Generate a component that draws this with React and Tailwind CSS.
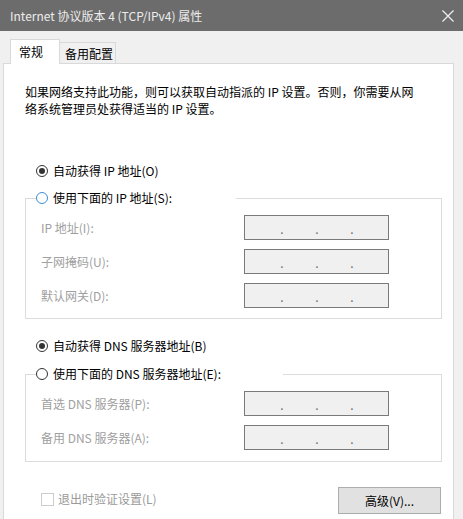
function Radio({ checked, blue }) {
  return (
    <span
      className={
        blue
          ? "flex h-[12px] w-[12px] shrink-0 items-center justify-center rounded-full border border-[#3c8fd9] bg-white"
          : "flex h-[12px] w-[12px] shrink-0 items-center justify-center rounded-full border border-[#333333] bg-white"
      }
    >
      {checked && <span className="h-[6px] w-[6px] rounded-full bg-[#333333]" />}
    </span>
  );
}

function IPBox() {
  return (
    <div className="flex h-[25px] w-[145px] items-center gap-[31px] border border-[#7a7a7a] bg-[#f0f0f0] pl-[35px] text-[12px] leading-[12px] text-[#6d6d6d]">
      <span className="w-[4px] pt-[3px] text-center">.</span>
      <span className="w-[4px] pt-[3px] text-center">.</span>
      <span className="w-[4px] pt-[3px] text-center">.</span>
    </div>
  );
}

function Row({ label }) {
  return (
    <div className="flex items-center">
      <span className="w-[203px] text-[#a0a0a0]">{label}</span>
      <IPBox />
    </div>
  );
}

export default function App() {
  return (
    <div className="flex h-[519px] w-[463px] flex-col overflow-hidden bg-[#f0f0f0] font-['Noto_Sans_CJK_SC',sans-serif] text-[12px] leading-[16px] text-black">
      {/* title bar */}
      <div className="flex h-[31px] shrink-0 items-center justify-between bg-[#6c6c6c] pl-[10px] pr-[7px]">
        <span className="text-[12px] text-[#ececec]">Internet 协议版本 4 (TCP/IPv4) 属性</span>
        <svg width="14" height="14" viewBox="0 0 14 14" className="mr-[1px]">
          <path d="M1.5 1.5 L12.5 12.5 M12.5 1.5 L1.5 12.5" stroke="#f4f4f4" strokeWidth="1.1" fill="none" />
        </svg>
      </div>

      {/* tabs */}
      <div className="mt-[8px] flex items-end pl-[10px]">
        <div className="relative z-10 -mb-px flex h-[25px] w-[50px] items-center border-x border-t border-[#d9d9d9] bg-white pl-[8px]">
          常规
        </div>
        <div className="flex h-[21px] w-[56px] items-center border-r border-t border-[#d9d9d9] bg-[#f0f0f0] pl-[5px] pt-[2px]">
          备用配置
        </div>
      </div>

      {/* panel */}
      <div className="ml-[3px] flex min-h-[480px] w-[451px] shrink-0 flex-col border border-[#d9d9d9] bg-white pl-[21px] pt-[19px]">
        <p className="leading-[17px]">
          如果网络支持此功能，则可以获取自动指派的 IP 设置。否则，你需要从网
          <br />
          络系统管理员处获得适当的 IP 设置。
        </p>

        <div className="mt-[46px] flex h-[16px] items-center gap-[5px] pl-[11px]">
          <Radio checked />
          <span>自动获得 IP 地址(O)</span>
        </div>

        <fieldset className="mt-[11px] w-[417px] border border-[#dcdcdc] pb-[10px] pl-[10px]">
          <legend className="flex h-[16px] w-[200px] items-center gap-[5px]">
            <Radio blue />
            <span>使用下面的 IP 地址(S):</span>
          </legend>
          <div className="ml-[5px] mt-[9px] flex flex-col gap-[9px]">
            <Row label="IP 地址(I):" />
            <Row label="子网掩码(U):" />
            <Row label="默认网关(D):" />
          </div>
        </fieldset>

        <div className="mt-[19px] flex h-[16px] items-center gap-[5px] pl-[11px]">
          <Radio checked />
          <span>自动获得 DNS 服务器地址(B)</span>
        </div>

        <fieldset className="mt-[12px] w-[417px] border border-[#dcdcdc] pb-[11px] pl-[10px]">
          <legend className="flex h-[16px] w-[247px] items-center gap-[5px]">
            <Radio />
            <span>使用下面的 DNS 服务器地址(E):</span>
          </legend>
          <div className="ml-[5px] mt-[9px] flex flex-col gap-[9px]">
            <Row label="首选 DNS 服务器(P):" />
            <Row label="备用 DNS 服务器(A):" />
          </div>
        </fieldset>

        <div className="mt-[25px] flex w-[417px] items-start justify-between">
          <div className="ml-[16px] mt-[4px] flex items-center gap-[4px]">
            <span className="h-[13px] w-[13px] border border-[#cccccc] bg-white" />
            <span className="text-[#9a9a9a]">退出时验证设置(L)</span>
          </div>
          <button className="mr-px flex h-[27px] w-[103px] items-center justify-center border border-[#adadad] bg-[#e1e1e1] text-[12px] text-black">
            高级(V)...
          </button>
        </div>
      </div>
    </div>
  );
}
